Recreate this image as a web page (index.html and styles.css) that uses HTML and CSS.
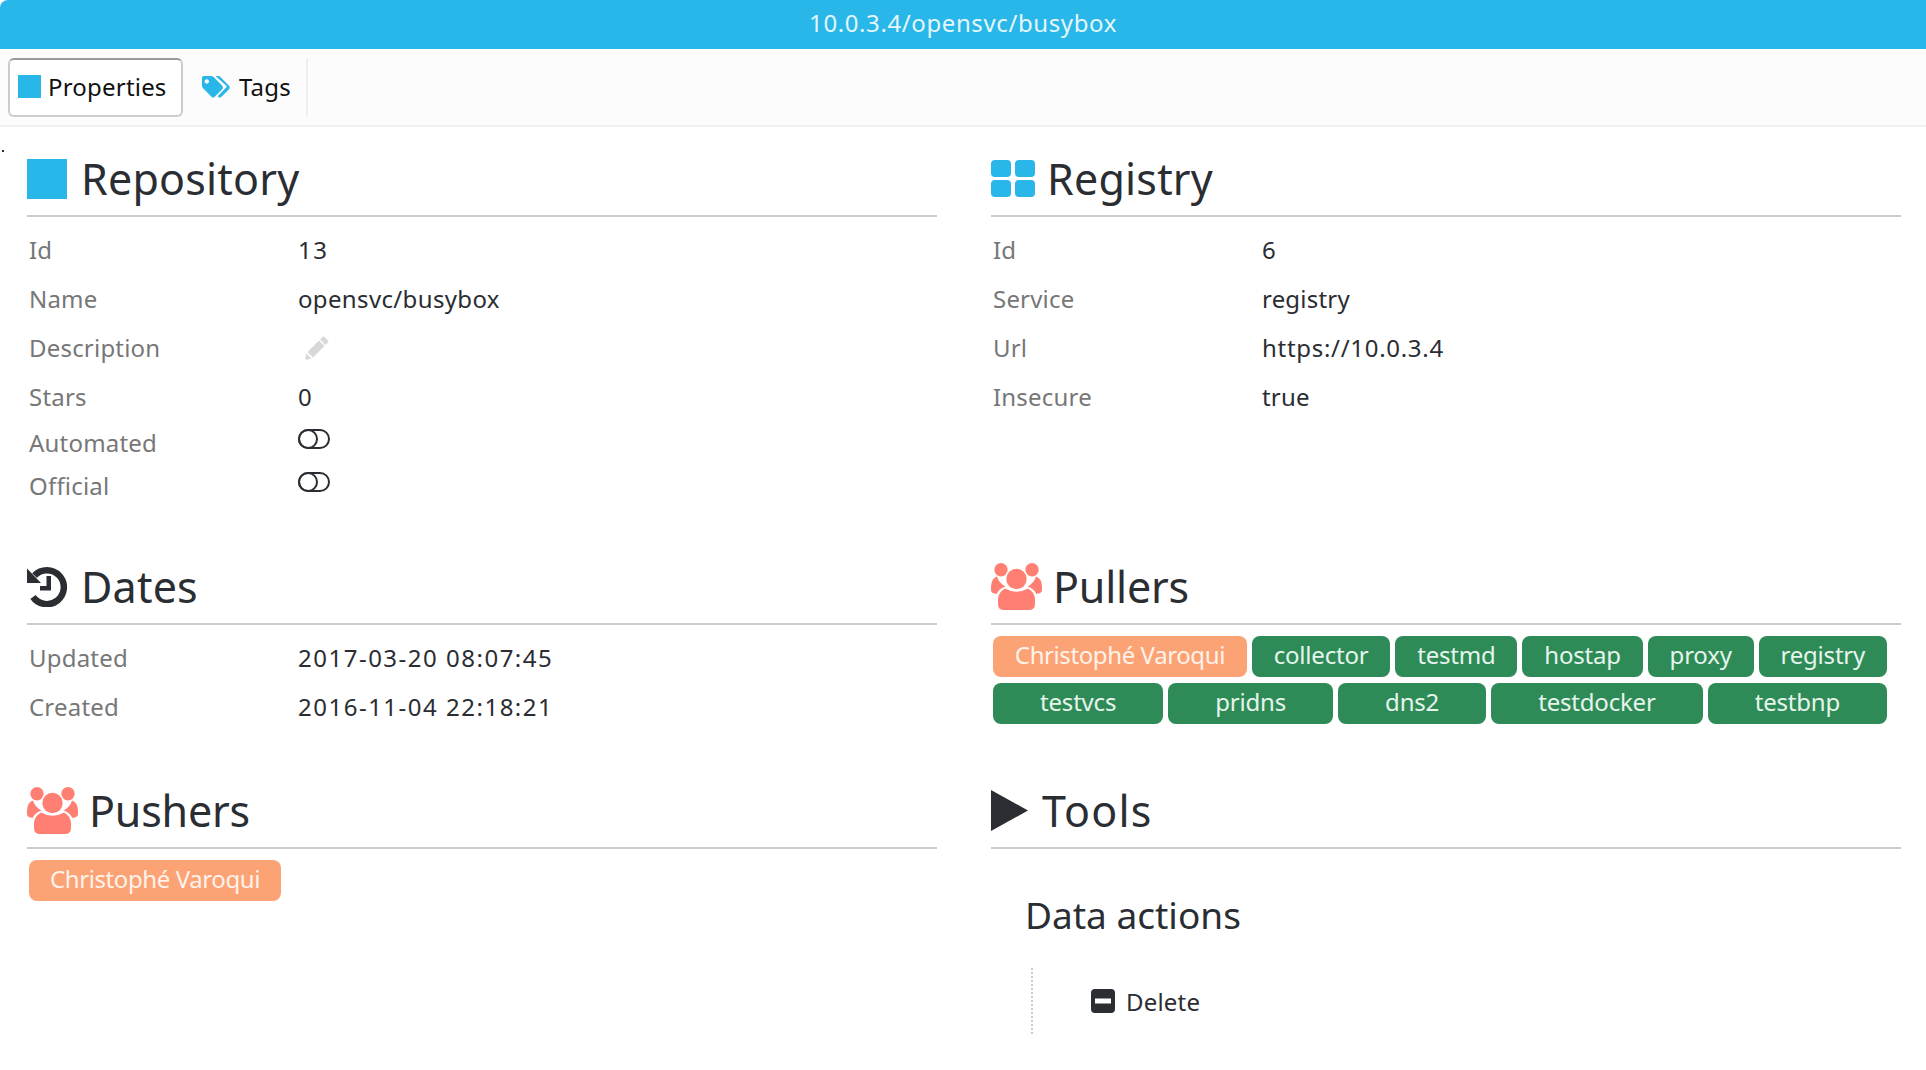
FILE: index.html
```html
<!DOCTYPE html>
<html lang="en">
<head>
    <meta charset="UTF-8">
    <title>10.0.3.4/opensvc/busybox</title>
    <link rel="stylesheet" href="styles.css">
</head>
<body>
    <svg class="icon-defs">
        <symbol id="users-shape" viewBox="0 0 51 47">
            <circle cx="10" cy="6.700" r="6.700" fill="#ff8073"/>
            <circle cx="41" cy="6.700" r="6.700" fill="#ff8073"/>
            <path fill="#ff8073" d="M0 23Q.5 15 6 13.500 8 20 14.500 23.500 8 25.500 5.500 31 0 30.500 0 27zM51 23Q50.500 15 45 13.500 43 20 36.500 23.500 43 25.500 45.500 31 51 30.500 51 27z"/>
            <circle cx="25.500" cy="16" r="11.500" fill="#fff"/>
            <circle cx="25.500" cy="16" r="10.200" fill="#ff8073"/>
            <path fill="#ff8073" d="M7 41v-5Q7.500 29 14 25.500q11.500 6.500 23 0Q43.500 29 44 36v5q0 6-6 6H13q-6 0-6-6z"/>
        </symbol>
    </svg>
    <header class="topbar">10.0.3.4/opensvc/busybox</header>
    <nav class="tabs">
        <div class="tab tab-active">
            <span class="tab-square"></span>
            Properties
        </div>
        <div class="tab">
            <svg class="tab-tags" viewBox="0 0 30 24"><path fill="#29b6e8" d="M1 2.500Q1 .5 3 .5h7.500q1.300 0 2.300 1L22 10.800q1.600 1.700 0 3.400l-7.800 8q-1.700 1.600-3.400 0L2 13q-1-1-1-2.300zM6 4a2.300 2.300 0 1 0 .01 0z"/><path fill="#29b6e8" d="M15 .5h2.500q1.300 0 2.300 1L29 10.800q1.600 1.700 0 3.400l-7.800 8q-1.700 1.600-3.400 0l-.6-.6 8.800-9q.9-1-.1-2.100z"/></svg>
            Tags
        </div>
    </nav>
    <span class="stray-dot"></span>
    <main class="sections">
        <section class="section">
            <h2 class="section-title">
                <span class="icon-square"></span>
                Repository
            </h2>
            <div class="props">
                <div class="prop"><span class="prop-label">Id</span><span class="num">13</span></div>
                <div class="prop"><span class="prop-label">Name</span><span class="text-value">opensvc/busybox</span></div>
                <div class="prop">
                    <span class="prop-label">Description</span>
                    <svg class="icon-pencil" viewBox="0 0 24 24"><path fill="#d8d8d8" d="M17.500 1q1-1 2 0l3.500 3.500q1 1 0 2l-2.500 2.500-5.500-5.500zM14 4.500l5.500 5.500L8 21.500 2.500 16zM1.500 17.500l5 5-4.500 1.300Q.2 24 .2 22.200z"/></svg>
                </div>
                <div class="prop"><span class="prop-label">Stars</span><span>0</span></div>
                <div class="prop prop-short">
                    <span class="prop-label">Automated</span>
                    <svg class="icon-toggle" viewBox="0 0 32 20"><rect x="1" y="1" width="30" height="18" rx="9" fill="none" stroke="#2a2d32" stroke-width="2"/><circle cx="10" cy="10" r="9" fill="none" stroke="#2a2d32" stroke-width="2"/></svg>
                </div>
                <div class="prop prop-short">
                    <span class="prop-label">Official</span>
                    <svg class="icon-toggle" viewBox="0 0 32 20"><rect x="1" y="1" width="30" height="18" rx="9" fill="none" stroke="#2a2d32" stroke-width="2"/><circle cx="10" cy="10" r="9" fill="none" stroke="#2a2d32" stroke-width="2"/></svg>
                </div>
            </div>
        </section>
        <section class="section">
            <h2 class="section-title">
                <svg class="icon-grid" viewBox="0 0 44 37"><rect width="20" height="17" rx="4" fill="#29b6e8"/><rect x="24" width="20" height="17" rx="4" fill="#29b6e8"/><rect y="20" width="20" height="17" rx="4" fill="#29b6e8"/><rect x="24" y="20" width="20" height="17" rx="4" fill="#29b6e8"/></svg>
                Registry
            </h2>
            <div class="props">
                <div class="prop"><span class="prop-label">Id</span><span>6</span></div>
                <div class="prop"><span class="prop-label">Service</span><span>registry</span></div>
                <div class="prop"><span class="prop-label">Url</span><span class="url">https://10.0.3.4</span></div>
                <div class="prop"><span class="prop-label">Insecure</span><span>true</span></div>
            </div>
        </section>
        <section class="section">
            <h2 class="section-title">
                <svg class="icon-history" viewBox="0 0 40 41"><path fill="none" stroke="#2a2d32" stroke-width="6.500" d="M7.500 9.500A17 17 0 1 1 6 31"/><path fill="#2a2d32" d="M0 2.500L14 17H0z"/><path fill="#2a2d32" d="M19.500 10h4.500v14.500H13V20h6.500z"/></svg>
                Dates
            </h2>
            <div class="props">
                <div class="prop"><span class="prop-label">Updated</span><span class="num">2017-03-20 08:07:45</span></div>
                <div class="prop"><span class="prop-label">Created</span><span class="num">2016-11-04 22:18:21</span></div>
            </div>
        </section>
        <section class="section">
            <h2 class="section-title title-tight">
                <svg class="icon-users"><use href="#users-shape"/></svg>
                Pullers
            </h2>
            <div class="tag-list tag-list-wide">
                <span class="tag tag-user">Christophé Varoqui</span>
                <span class="tag">collector</span>
                <span class="tag">testmd</span>
                <span class="tag">hostap</span>
                <span class="tag">proxy</span>
                <span class="tag">registry</span>
                <span class="tag">testvcs</span>
                <span class="tag">pridns</span>
                <span class="tag">dns2</span>
                <span class="tag">testdocker</span>
                <span class="tag">testbnp</span>
            </div>
        </section>
        <section class="section">
            <h2 class="section-title title-tight">
                <svg class="icon-users"><use href="#users-shape"/></svg>
                Pushers
            </h2>
            <div class="tag-list">
                <span class="tag tag-user">Christophé Varoqui</span>
            </div>
        </section>
        <section class="section">
            <h2 class="section-title title-wide">
                <svg class="icon-play" viewBox="0 0 37 41"><path fill="#2a2d32" d="M0 0l37 20.500L0 41z"/></svg>
                Tools
            </h2>
            <h3 class="subtitle">Data actions</h3>
            <div class="actions">
                <div class="action">
                    <svg class="icon-minus" viewBox="0 0 24 24"><path fill="#2a2d32" fill-rule="evenodd" d="M4 0h16q4 0 4 4v16q0 4-4 4H4q-4 0-4-4V4q0-4 4-4zM4 9.500v5h16v-5z"/></svg>
                    Delete
                </div>
            </div>
        </section>
    </main>
</body>
</html>
```

FILE: styles.css
```css
body {
    font-family: 'Noto Sans', sans-serif;
    margin: 0;
    padding: 0;
    background: #fff;
    color: #2a2d32;
    font-size: 24px;
    letter-spacing: 0.2px;
}
.icon-defs {
    display: none;
}
.topbar {
    height: 49px;
    line-height: 46px;
    background: #29b6e8;
    color: #e4f6fc;
    text-align: center;
    letter-spacing: 0.6px;
    border-top-left-radius: 8px;
}
.tabs {
    display: flex;
    height: 78px;
    box-sizing: border-box;
    padding: 9px 0 0 8px;
    background: #fcfcfc;
    border-bottom: 2px solid #f0f0f0;
}
.tab {
    display: flex;
    align-items: center;
    height: 59px;
    box-sizing: border-box;
    padding: 0 15px 2px 18px;
    border-right: 2px solid #f0f0f0;
    color: #111;
}
.tab-active {
    width: 175px;
    padding: 0 0 2px 8px;
    background: #fff;
    border: 2px solid #ccc;
    border-top-color: #999;
    border-radius: 6px;
}
.tab-square {
    width: 23px;
    height: 23px;
    margin-right: 7px;
    background: #29b6e8;
}
.tab-tags {
    width: 29px;
    height: 24px;
    margin-right: 9px;
}
.stray-dot {
    position: absolute;
    left: 2px;
    top: 150px;
    width: 2px;
    height: 2px;
    background: #2a2d32;
}
.sections {
    display: grid;
    grid-template-columns: 910px 910px;
    column-gap: 54px;
    padding: 25px 0 0 27px;
}
.section {
    min-width: 0;
}
.section-title {
    display: flex;
    align-items: center;
    gap: 14px;
    height: 53px;
    margin: 0;
    padding-bottom: 10px;
    border-bottom: 2px solid #ccc;
    font-size: 43px;
    font-weight: 400;
}
.title-tight {
    letter-spacing: -0.2px;
}
.title-wide {
    letter-spacing: 1.2px;
}
.icon-square {
    width: 40px;
    height: 40px;
    background: #29b6e8;
}
.icon-grid {
    width: 44px;
    height: 37px;
    margin-right: -2px;
}
.icon-history {
    width: 40px;
    height: 41px;
}
.icon-users {
    width: 51px;
    height: 47px;
    margin-right: -3px;
}
.icon-play {
    width: 37px;
    height: 41px;
}
.props {
    padding: 8px 0 53px;
}
.prop {
    display: flex;
    align-items: center;
    height: 49px;
    padding-left: 2px;
}
.prop-short {
    height: 43px;
}
.prop-label {
    width: 269px;
    flex: none;
    color: #777;
}
.num {
    letter-spacing: 1.5px;
}
.url {
    letter-spacing: 0.7px;
}
.text-value {
    letter-spacing: 0.35px;
}
.icon-pencil {
    width: 24px;
    height: 24px;
    margin-left: 7px;
}
.icon-toggle {
    width: 32px;
    height: 20px;
    margin-top: -7px;
}
.tag-list {
    display: flex;
    flex-wrap: wrap;
    gap: 6px 5px;
    padding: 11px 14px 0 2px;
}
.tag {
    flex: 0 0 auto;
    height: 41px;
    line-height: 38px;
    padding: 0 21px;
    box-sizing: border-box;
    background: #2e8b57;
    color: #e6f5ec;
    border-radius: 8px;
    letter-spacing: -0.2px;
}
.tag-list-wide .tag {
    flex-grow: 1;
    text-align: center;
}
.tag-user {
    background: #fca375;
    color: #fff2ea;
    letter-spacing: -0.4px;
}
.subtitle {
    margin: 41px 0 0 34px;
    font-size: 37px;
    font-weight: 400;
    line-height: 50px;
    letter-spacing: 0;
}
.actions {
    margin: 28px 0 0 40px;
    padding-left: 58px;
    height: 66px;
    border-left: 2px dotted #ccc;
}
.action {
    display: flex;
    align-items: center;
    gap: 11px;
    height: 66px;
}
.icon-minus {
    width: 24px;
    height: 24px;
}
```
